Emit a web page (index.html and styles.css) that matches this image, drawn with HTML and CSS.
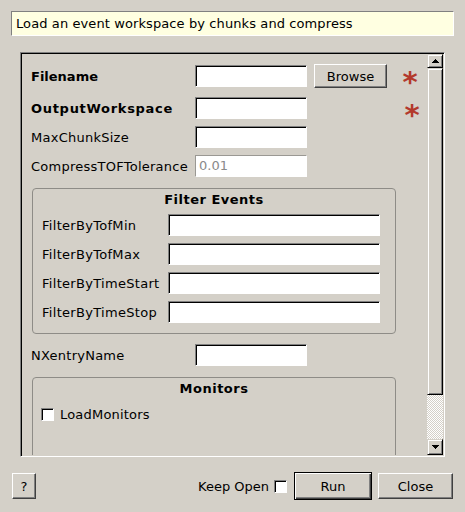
FILE: index.html
```html
<!DOCTYPE html>
<html>
<head>
<meta charset="utf-8">
<link rel="stylesheet" href="styles.css">
</head>
<body>
<div class="dialog">
  <div class="desc">Load an event workspace by chunks and compress</div>
  <div class="scroll">
    <div class="viewport">
      <div class="content">
        <div class="prow first">
          <span class="lbl bold">Filename</span>
          <div class="field"></div>
          <div class="btn browse">Browse</div>
          <span class="req">*</span>
        </div>
        <div class="prow">
          <span class="lbl bold wide-bold">OutputWorkspace</span>
          <div class="field"></div>
          <span class="req req2">*</span>
        </div>
        <div class="prow">
          <span class="lbl">MaxChunkSize</span>
          <div class="field"></div>
        </div>
        <div class="prow">
          <span class="lbl">CompressTOFTolerance</span>
          <div class="field dim">0.01</div>
        </div>
        <div class="group">
          <div class="gtitle">Filter Events</div>
          <div class="grow"><span class="glbl">FilterByTofMin</span><div class="field wide"></div></div>
          <div class="grow"><span class="glbl">FilterByTofMax</span><div class="field wide"></div></div>
          <div class="grow"><span class="glbl">FilterByTimeStart</span><div class="field wide"></div></div>
          <div class="grow"><span class="glbl">FilterByTimeStop</span><div class="field wide"></div></div>
        </div>
        <div class="prow after">
          <span class="lbl">NXentryName</span>
          <div class="field"></div>
        </div>
        <div class="group monitors">
          <div class="gtitle">Monitors</div>
          <div class="crow"><span class="check"></span><span class="ctext">LoadMonitors</span></div>
        </div>
      </div>
    </div>
    <div class="vbar">
      <div class="sbtn up"><svg width="7" height="4" viewBox="0 0 7 4" shape-rendering="crispEdges"><path d="M3 0h1v1h1v1h1v1h1v1H0V3h1V2h1V1h1z" fill="#000"/></svg></div>
      <div class="thumb"></div>
      <div class="track"></div>
      <div class="sbtn down"><svg width="7" height="4" viewBox="0 0 7 4" shape-rendering="crispEdges"><path d="M0 0h7v1H6v1H5v1H4v1H3V3H2V2H1V1H0z" fill="#000"/></svg></div>
    </div>
  </div>
  <div class="footer">
    <div class="btn help">?</div>
    <div class="spacer"></div>
    <span class="keep">Keep Open</span>
    <span class="check keepbox"></span>
    <div class="btn run">Run</div>
    <div class="btn close">Close</div>
  </div>
</div>
</body>
</html>
```
FILE: styles.css
```css
* { box-sizing: border-box; }
body {
  margin: 0;
  width: 465px;
  height: 512px;
  overflow: hidden;
  background: #d4d0c8;
  font-family: "DejaVu Sans", sans-serif;
  font-size: 13px;
  color: #000;
}
.dialog { padding-top: 11px; }
.desc {
  margin: 0 11px;
  height: 25px;
  background: #ffffe1;
  border: 1px solid;
  border-color: #808080 #fff #fff #808080;
  padding-left: 4px;
  line-height: 23px;
  white-space: nowrap;
  letter-spacing: 0.1px;
}
.scroll {
  margin: 16px 0 0 20px;
  width: 425px;
  height: 405px;
  display: flex;
  border: 1px solid;
  border-color: #808080 #fff #fff #808080;
  box-shadow: inset 1px 1px 0 #000;
  padding: 1px;
}
.viewport { width: 405px; height: 401px; overflow: hidden; }
.content { padding: 10px 0 0 9px; }
.prow { display: flex; align-items: center; height: 22px; margin-bottom: 7px; }
.prow.first { height: 24px; margin-bottom: 9px; }
.prow.after { margin-top: 10px; }
.lbl { width: 164px; flex: none; white-space: nowrap; letter-spacing: 0.25px; }
.bold { font-weight: bold; letter-spacing: 0; }
.wide-bold { letter-spacing: 0.7px; }
.field {
  width: 112px;
  height: 22px;
  flex: none;
  background: #fff;
  border: 1px solid;
  border-color: #808080 #fff #fff #808080;
  box-shadow: inset 1px 1px 0 #000;
}
.field.dim {
  box-shadow: none;
  border-color: #9a9893 #fff #fff #9a9893;
  color: #8a8a8a;
  padding-left: 3px;
  line-height: 20px;
}
.field.wide { width: 212px; }
.btn {
  display: flex;
  align-items: center;
  justify-content: center;
  background: #d4d0c8;
  border: 1px solid;
  border-color: #fff #404040 #404040 #fff;
  box-shadow: inset -1px -1px 0 #808080;
  flex: none;
}
.browse { margin-left: 7px; width: 73px; height: 24px; }
.req {
  flex: none;
  width: 30px;
  margin-left: 8px;
  height: 22px;
  line-height: 22px;
  margin-top: 12px;
  text-align: center;
  color: #b3392c;
  font-size: 29px;
  font-weight: bold;
}
.req2 { margin-left: 90px; margin-top: 14px; }
.group {
  margin: 11px 0 0 1px;
  width: 364px;
  border: 1px solid #8e8c87;
  border-radius: 4px;
  padding: 0 0 3px 9px;
}
.gtitle {
  font-weight: bold;
  text-align: center;
  height: 21px;
  line-height: 21px;
  margin: 0 0 4px -9px;
  letter-spacing: 0.5px;
}
.grow { display: flex; align-items: center; height: 22px; margin-bottom: 7px; }
.glbl { width: 126px; flex: none; white-space: nowrap; letter-spacing: 0.3px; }
.monitors { height: 120px; padding-left: 8px; }
.monitors .gtitle { margin-left: -8px; }
.crow { display: flex; align-items: center; height: 22px; }
.check {
  display: block;
  width: 13px;
  height: 13px;
  flex: none;
  background: #fff;
  border: 1px solid;
  border-color: #808080 #fff #fff #808080;
  box-shadow: inset 1px 1px 0 #000;
}
.ctext { margin-left: 6px; letter-spacing: 0.2px; }
.vbar { width: 16px; display: flex; flex-direction: column; }
.sbtn, .thumb {
  background: #d4d0c8;
  border: 1px solid;
  border-color: #d4d0c8 #000 #000 #d4d0c8;
  box-shadow: inset 1px 1px 0 #fff, inset -1px -1px 0 #808080;
}
.sbtn { display: flex; align-items: center; justify-content: center; }
.sbtn svg { display: block; }
.up { height: 14px; }
.thumb { height: 327px; }
.track {
  height: 44px;
  background: repeating-conic-gradient(#fff 0 25%, #d4d0c8 0 50%) 0 0 / 2px 2px;
}
.down { height: 16px; }
.footer {
  display: flex;
  align-items: center;
  height: 28px;
  margin-top: 15px;
  padding: 0 12px;
}
.help { width: 24px; height: 26px; }
.spacer { flex: 1; }
.keep { white-space: nowrap; }
.keepbox { margin-left: 5px; }
.run {
  margin-left: 7px;
  width: 78px;
  height: 28px;
  border: 1px solid #000;
  box-shadow: inset 1px 1px 0 #fff, inset -1px -1px 0 #404040, inset -2px -2px 0 #808080;
}
.close { margin-left: 6px; width: 75px; height: 26px; }
```
